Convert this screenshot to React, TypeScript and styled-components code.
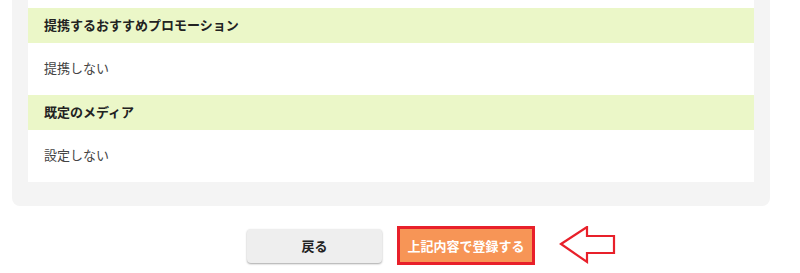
import React from "react";
import styled, { createGlobalStyle } from "styled-components";

const GlobalStyle = createGlobalStyle`
  body {
    margin: 0;
    background: #ffffff;
    font-family: "Noto Sans CJK JP", "Noto Sans", sans-serif;
  }
`;

const rows = [
  { label: "提携するおすすめプロモーション", value: "提携しない" },
  { label: "既定のメディア", value: "設定しない" },
];

const App = () => {
  return (
    <>
      <GlobalStyle />
      <Page>
        <Panel>
          <Card>
            {rows.map((row) => (
              <React.Fragment key={row.label}>
                <RowHead>{row.label}</RowHead>
                <RowValue>{row.value}</RowValue>
              </React.Fragment>
            ))}
          </Card>
        </Panel>
        <Actions>
          <BackButton type="button">戻る</BackButton>
          <SubmitButton type="button">上記内容で登録する</SubmitButton>
          <Arrow width="58" height="40" viewBox="0 0 58 40">
            <path
              d="M2 18 L28 1 L28 10 L55 10 L55 27 L28 27 L28 36 Z"
              fill="#ffffff"
              stroke="#e8202a"
              strokeWidth="2.2"
              strokeLinejoin="miter"
            />
          </Arrow>
        </Actions>
      </Page>
    </>
  );
};

export default App;

const Page = styled.div`
  width: 800px;
  height: 273px;
  overflow: hidden;
`;

const Panel = styled.section`
  margin-left: 12px;
  width: 758px;
  box-sizing: border-box;
  padding: 0 16px 24px;
  background-color: #f4f4f4;
  border-radius: 0 0 8px 8px;
`;

const Card = styled.div`
  background-color: #ffffff;
  padding-top: 8px;
`;

const RowHead = styled.div`
  height: 35px;
  box-sizing: border-box;
  display: flex;
  align-items: center;
  padding: 0 16px 3px;
  background-color: #ebf7c8;
  font-size: 13px;
  line-height: 1;
  font-weight: bold;
  color: #222222;
`;

const RowValue = styled.div`
  height: 52px;
  box-sizing: border-box;
  display: flex;
  align-items: center;
  padding: 0 16px 3px;
  font-size: 13px;
  line-height: 1;
  color: #444444;
`;

const Actions = styled.div`
  position: relative;
  width: 758px;
  margin: 20px 0 0 12px;
  display: flex;
  justify-content: center;
  align-items: center;
  gap: 15px;
`;

const BackButton = styled.button`
  width: 135px;
  height: 34px;
  border: none;
  border-radius: 4px;
  background-color: #eeeeee;
  box-shadow: 0 1px 2px rgba(0, 0, 0, 0.35);
  font-family: inherit;
  font-size: 13px;
  font-weight: bold;
  color: #222222;
  cursor: pointer;
`;

const SubmitButton = styled.button`
  width: 138px;
  height: 39px;
  box-sizing: border-box;
  border: 3px solid #e8202a;
  border-radius: 0;
  background-color: #f79556;
  font-family: inherit;
  font-size: 13px;
  font-weight: bold;
  color: #ffffff;
  cursor: pointer;
`;

const Arrow = styled.svg`
  position: absolute;
  left: 547px;
  top: 0px;
`;
